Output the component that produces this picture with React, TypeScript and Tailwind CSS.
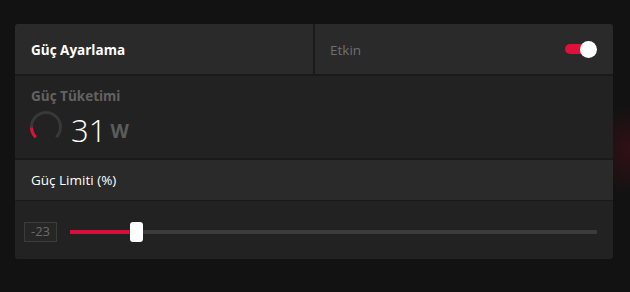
import { useState } from "react"

function Gauge() {
  // 270° arc, opening at the bottom
  const r = 14.5
  const cx = 17
  const cy = 17
  const pt = (deg: number) => {
    const a = (deg * Math.PI) / 180
    return `${cx + r * Math.cos(a)} ${cy + r * Math.sin(a)}`
  }
  return (
    <svg width="34" height="34" viewBox="0 0 34 34">
      <path d={`M ${pt(135)} A ${r} ${r} 0 1 1 ${pt(45)}`} fill="none" stroke="#383838" strokeWidth="3" />
      <path d={`M ${pt(135)} A ${r} ${r} 0 0 1 ${pt(178)}`} fill="none" stroke="#e0103a" strokeWidth="3" />
    </svg>
  )
}

export default function App() {
  const [enabled, setEnabled] = useState(true)
  const value = -23
  const pct = 12

  return (
    <div
      className="w-[630px] h-[292px] bg-[#121212] bg-[radial-gradient(circle_at_632px_150px,rgba(110,10,30,0.35),transparent_45px)] pt-[24px] pl-[15px]"
      style={{ fontFamily: '"Open Sans", "Noto Sans", sans-serif' }}
    >
      <div className="w-[598px] flex flex-col bg-[#1a1a1a] rounded-[3px] overflow-hidden">
        {/* header */}
        <div className="flex h-[50px] gap-[2px]">
          <div className="w-[298px] bg-[#2a2a2a] flex items-center pl-[16px] pt-[2px]">
            <span className="text-[13.5px] leading-[18px] font-bold text-white">Güç Ayarlama</span>
          </div>
          <div className="flex-1 bg-[#2a2a2a] flex items-center justify-between pl-[15px] pr-[16px]">
            <span className="mt-[2px] text-[13.5px] leading-[18px] text-[#6f6f6f]">Etkin</span>
            <button
              onClick={() => setEnabled(!enabled)}
              className="relative w-[32px] h-[17px] flex items-center"
              aria-label="Etkin"
            >
              <span className={`w-[26px] h-[10px] rounded-full ${enabled ? "bg-[#e0103a]" : "bg-[#444]"}`} />
              <span
                className={`absolute top-0 w-[17px] h-[17px] rounded-full bg-white ${enabled ? "right-0" : "left-0"}`}
              />
            </button>
          </div>
        </div>

        {/* consumption */}
        <div className="mt-[2px] h-[82px] bg-[#222222] pl-[16px] pt-[11px]">
          <div className="text-[13.5px] font-bold text-[#626262] leading-[18px]">Güç Tüketimi</div>
          <div className="flex items-start -ml-[2px]">
            <div className="mt-[5px]">
              <Gauge />
            </div>
            <span className="mt-[7px] ml-[8px] text-[31px] font-light text-white leading-[36px]">31</span>
            <span className="mt-[14px] ml-[4px] text-[19px] font-bold text-[#5c5c5c] leading-[24px]">W</span>
          </div>
        </div>

        {/* limit header */}
        <div className="mt-[2px] h-[41px] bg-[#2a2a2a] flex items-center pl-[16px] border-b border-[#1a1a1a]">
          <span className="text-[13.5px] leading-[18px] text-white">Güç Limiti (%)</span>
        </div>

        {/* slider */}
        <div className="h-[58px] bg-[#222222] flex items-center pl-[9px] pr-[16px] pt-[4px]">
          <div className="w-[33px] h-[20px] border border-[#3c3c3c] bg-[#262626] flex items-center justify-center text-[13px] text-[#6a6a6a]">
            {value}
          </div>
          <div className="relative flex-1 ml-[13px] h-[20px] flex items-center">
            <div className="w-full h-[4px] bg-[#3b3b3b] rounded-[1px]" />
            <div className="absolute left-0 h-[4px] bg-[#d4103a]" style={{ width: `${pct}%` }} />
            <div
              className="absolute top-0 w-[13px] h-[20px] bg-white rounded-[3px]"
              style={{ left: `calc(${pct}% - 3px)` }}
            />
          </div>
        </div>
      </div>
    </div>
  )
}
